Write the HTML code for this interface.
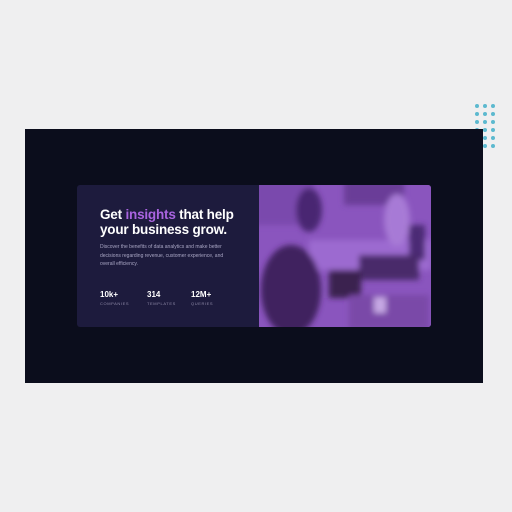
<!DOCTYPE html>
<html><head><style>
html,body{margin:0;padding:0;width:512px;height:512px;overflow:hidden;background:#efeff0;font-family:"Liberation Sans",sans-serif}
.frame{position:absolute;left:25px;top:129px;width:458px;height:254px;background:#0b0d1c;z-index:2}
.card{position:absolute;left:77px;top:185px;width:354px;height:142px;background:#1d1b3d;border-radius:3px;overflow:hidden;z-index:3}
.img{position:absolute;left:182px;top:0;width:172px;height:142px;background:#8450b8;overflow:hidden}
h1{position:absolute;left:23px;top:22px;margin:0;color:#fff;font-size:13.5px;line-height:15px;font-weight:bold;letter-spacing:-0.2px}
h1 span{color:#a964e0}
p{position:absolute;left:23px;top:58px;width:130px;margin:0;color:#a9a6c4;font-size:5px;line-height:8.5px}
.st{position:absolute;top:105px;color:#fff;font-size:8px;font-weight:bold}
.st small{display:block;color:#8f8aa8;font-size:4px;letter-spacing:0.6px;font-weight:normal;margin-top:2px}
.dot{position:absolute;width:4px;height:4px;border-radius:50%;background:#5cb9cf;z-index:1}
</style></head><body>
<div class="frame"></div>
<div id="dots"></div>
<div class="card">
<h1>Get <span>insights</span> that help<br>your business grow.</h1>
<p>Discover the benefits of data analytics and make better decisions regarding revenue, customer experience, and overall efficiency.</p>
<div class="st" style="left:23px">10k+<small>COMPANIES</small></div>
<div class="st" style="left:70px">314<small>TEMPLATES</small></div>
<div class="st" style="left:114px">12M+<small>QUERIES</small></div>
<div class="img">
<svg width="172" height="142" viewBox="0 0 172 142">
<defs><filter id="b"><feGaussianBlur stdDeviation="3"/></filter></defs>
<rect width="172" height="142" fill="#8a55be"/>
<g filter="url(#b)">
<rect x="-5" y="-5" width="60" height="45" fill="#7a48ad"/>
<rect x="85" y="-5" width="60" height="25" fill="#6a3c98"/>
<rect x="50" y="55" width="122" height="30" fill="#9c6ad0"/>
<ellipse cx="50" cy="25" rx="13" ry="22" fill="#4a2872"/>
<ellipse cx="138" cy="35" rx="13" ry="26" fill="#a77ad6"/>
<rect x="150" y="40" width="16" height="35" fill="#4c2a74"/>
<ellipse cx="32" cy="105" rx="30" ry="45" fill="#41225f"/>
<rect x="100" y="70" width="60" height="25" fill="#4a2a6a"/>
<rect x="70" y="85" width="32" height="28" fill="#3a2050"/>
<rect x="90" y="110" width="80" height="35" fill="#7a4aa8"/>
<rect x="115" y="112" width="12" height="16" fill="#c6a8e4"/>
</g>
</svg>
</div>
</div>
<script>
var d=document.getElementById('dots');
for(var r=0;r<6;r++)for(var c=0;c<3;c++){var e=document.createElement('div');e.className='dot';e.style.left=(475+c*8)+'px';e.style.top=(104+r*8)+'px';d.appendChild(e);}
</script>
</body></html>
